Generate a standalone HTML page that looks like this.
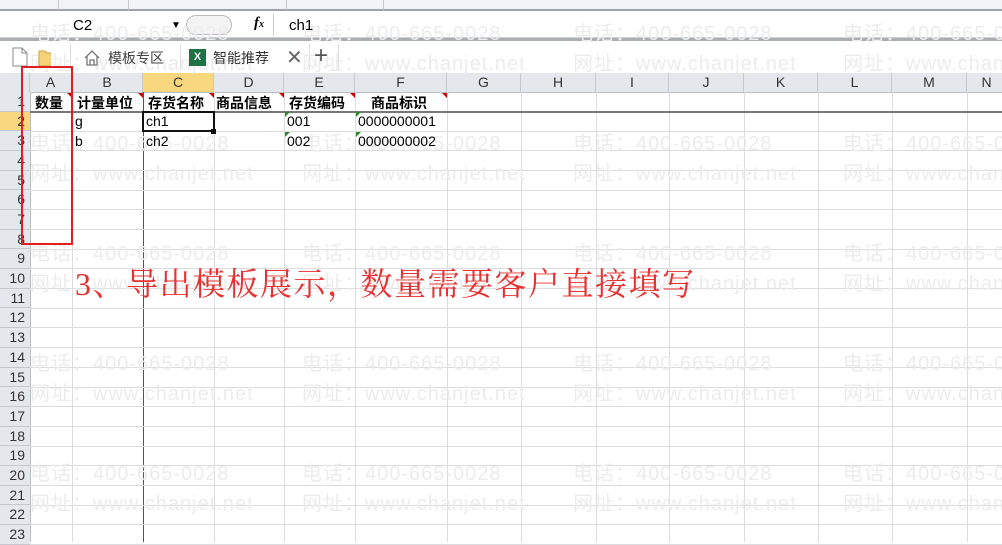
<!DOCTYPE html>
<html><head><meta charset="utf-8"><style>
*{margin:0;padding:0;box-sizing:border-box}
body{width:1002px;height:542px;overflow:hidden;background:#fff;position:relative;font-family:"Liberation Sans","Noto Sans CJK SC",sans-serif;}
.a{position:absolute}
.wm{position:absolute;color:#ececec;font-size:20px;letter-spacing:1px;white-space:nowrap;font-family:"Liberation Sans","Noto Sans CJK SC",sans-serif;z-index:5}
.vl{position:absolute;width:1px;background:#dadcdd;top:92px;height:450px}
.hl{position:absolute;height:1px;background:#dadcdd;left:30px;width:972px}
.ch{position:absolute;top:73px;height:19px;font-size:14px;color:#333;text-align:center;line-height:19px;border-right:1px solid #c5c9cf}
.rh{position:absolute;left:0;width:30px;font-size:14px;color:#333;text-align:right;padding-right:5px;border-bottom:1px solid #c5c9cf;background:#e4e7ec;z-index:6}
.c{position:absolute;font-size:14px;color:#000;white-space:nowrap;z-index:6}
.b{font-weight:bold;font-family:"Liberation Sans","Noto Sans CJK SC",sans-serif}
.tri{position:absolute;width:0;height:0;border-top:5px solid #c00;border-left:5px solid transparent;z-index:7}
.gtri{position:absolute;width:0;height:0;border-top:5px solid #2a8a2a;border-right:5px solid transparent;z-index:7}
</style></head><body>
<div class="a" style="left:0;top:0;width:1002px;height:11px;background:#f2f3f5;border-bottom:2px solid #9da3aa"></div>
<div class="a" style="left:58px;top:0;width:1px;height:10px;background:#c8c8c8"></div>
<div class="a" style="left:128px;top:0;width:1px;height:10px;background:#c8c8c8"></div>
<div class="a" style="left:286px;top:0;width:1px;height:10px;background:#c8c8c8"></div>
<div class="a" style="left:383px;top:0;width:1px;height:10px;background:#c8c8c8"></div>
<div class="a" style="left:0;top:13px;width:1002px;height:28px;background:#fff;border-bottom:3px solid #a9aeb4"></div>
<div class="a" style="left:0;top:37px;width:1002px;height:1px;background:#d0d0d0"></div>
<div class="a" style="left:73px;top:17px;font-size:15px;z-index:6">C2</div>
<div class="a" style="left:171px;top:20px;font-size:10px;z-index:6">▼</div>
<div class="a" style="left:186px;top:15px;width:46px;height:20px;border:1px solid #bbb;border-radius:10px;background:#f4f4f4"></div>
<div class="a" style="left:254px;top:15px;font-size:15px;font-style:italic;font-weight:bold;font-family:'Liberation Serif',serif;z-index:6">f<span style="font-size:10px">x</span></div>
<div class="a" style="left:273px;top:14px;width:1px;height:22px;background:#ccc"></div>
<div class="a" style="left:289px;top:17px;font-size:15px;z-index:6">ch1</div>
<div class="a" style="left:0;top:41px;width:1002px;height:32px;background:#fff"></div>
<svg class="a" style="left:11px;top:47px;z-index:6" width="40" height="20"><path d="M2 1h9l5 5v13H2z M11 1v5h5" fill="#fff" stroke="#888" stroke-width="1"/><path d="M28 4h6l2 2h8v13H28z" fill="#f3d27a" stroke="#c9a040"/></svg>
<div class="a" style="left:70px;top:44px;width:1px;height:26px;background:#ddd"></div>
<svg class="a" style="left:83px;top:49px;z-index:6" width="18" height="18"><path d="M2 9L9 2l7 7M4 7v9h10V7M7 16v-5h4v5" fill="none" stroke="#777" stroke-width="1.3"/></svg>
<div class="a" style="left:108px;top:48px;font-size:14px;color:#444;z-index:6">模板专区</div>
<div class="a" style="left:180px;top:44px;width:1px;height:26px;background:#ddd"></div>
<div class="a" style="left:189px;top:49px;width:17px;height:17px;background:#1f7244;color:#fff;font-size:11px;font-weight:bold;text-align:center;line-height:17px;z-index:6">X</div>
<div class="a" style="left:213px;top:48px;font-size:14px;color:#333;z-index:6">智能推荐</div>
<div class="a" style="left:286px;top:45px;font-size:20px;color:#666;z-index:6">✕</div>
<div class="a" style="left:314px;top:42px;font-size:24px;color:#555;z-index:6">+</div>
<div class="a" style="left:309px;top:44px;width:1px;height:26px;background:#ddd"></div>
<div class="a" style="left:338px;top:44px;width:1px;height:26px;background:#ddd"></div>
<div class="a" style="left:0;top:73px;width:1002px;height:20px;background:#e4e7ec;border-bottom:1px solid #b9bec5"></div>
<div class="ch" style="left:0;width:30px"></div>
<div class="ch" style="left:30px;width:42px">A</div>
<div class="ch" style="left:72px;width:71px">B</div>
<div class="ch" style="left:143px;width:71px;background:#f9d77e">C</div>
<div class="ch" style="left:214px;width:70px">D</div>
<div class="ch" style="left:284px;width:71px">E</div>
<div class="ch" style="left:355px;width:92px">F</div>
<div class="ch" style="left:447px;width:74px">G</div>
<div class="ch" style="left:521px;width:75px">H</div>
<div class="ch" style="left:596px;width:73px">I</div>
<div class="ch" style="left:669px;width:75px">J</div>
<div class="ch" style="left:744px;width:74px">K</div>
<div class="ch" style="left:818px;width:74px">L</div>
<div class="ch" style="left:892px;width:75px">M</div>
<div class="ch" style="left:967px;width:40px">N</div>
<div class="vl" style="left:72px"></div>
<div class="vl" style="left:143px;background:#555"></div>
<div class="vl" style="left:214px"></div>
<div class="vl" style="left:284px"></div>
<div class="vl" style="left:355px"></div>
<div class="vl" style="left:447px"></div>
<div class="vl" style="left:521px"></div>
<div class="vl" style="left:596px"></div>
<div class="vl" style="left:669px"></div>
<div class="vl" style="left:744px"></div>
<div class="vl" style="left:818px"></div>
<div class="vl" style="left:892px"></div>
<div class="vl" style="left:967px"></div>
<div class="vl" style="left:30px;background:#b9bec5"></div>
<div id="rows"></div>
<script>
var h='';for(var i=1;i<=23;i++){var t=92+(i-1)*19.68;var bg=i==2?'#f9d77e':'#e4e7ec';
h+='<div class="rh" style="top:'+t+'px;height:19.68px;line-height:19px;background:'+bg+'">'+i+'</div>';
h+='<div class="hl" style="top:'+(t+19)+'px;'+(i==1?'background:#777;height:2px':'')+'"></div>';}
document.getElementById('rows').innerHTML=h;
</script>
<script>
var w='';[17,127,237,347,457].forEach(function(y){[30,302,573,843].forEach(function(x){
w+='<div class="wm" style="left:'+x+'px;top:'+y+'px">电话：400-665-0028</div>';
w+='<div class="wm" style="left:'+x+'px;top:'+(y+30)+'px">网址：www.chanjet.net</div>';});});
document.write(w);
</script>
<div class="c b" style="left:35px;top:93px">数量</div>
<div class="c b" style="left:77px;top:93px">计量单位</div>
<div class="c b" style="left:148px;top:93px">存货名称</div>
<div class="c b" style="left:216px;top:93px">商品信息</div>
<div class="c b" style="left:289px;top:93px">存货编码</div>
<div class="c b" style="left:371px;top:93px">商品标识</div>
<div class="tri" style="left:67px;top:93px"></div>
<div class="tri" style="left:138px;top:93px"></div>
<div class="tri" style="left:209px;top:93px"></div>
<div class="tri" style="left:279px;top:93px"></div>
<div class="tri" style="left:350px;top:93px"></div>
<div class="tri" style="left:442px;top:93px"></div>
<div class="c" style="left:75px;top:113px">g</div>
<div class="c" style="left:146px;top:113px">ch1</div>
<div class="c" style="left:287px;top:113px">001</div>
<div class="c" style="left:358px;top:113px">0000000001</div>
<div class="c" style="left:75px;top:133px">b</div>
<div class="c" style="left:146px;top:133px">ch2</div>
<div class="c" style="left:287px;top:133px">002</div>
<div class="c" style="left:358px;top:133px">0000000002</div>
<div class="gtri" style="left:285px;top:112px"></div>
<div class="gtri" style="left:356px;top:112px"></div>
<div class="gtri" style="left:285px;top:132px"></div>
<div class="gtri" style="left:356px;top:132px"></div>
<div class="a" style="left:142px;top:111px;width:73px;height:21px;border:2px solid #111;z-index:7"></div>
<div class="a" style="left:211px;top:129px;width:5px;height:5px;background:#111;z-index:8"></div>
<div class="a" style="left:21px;top:66px;width:52px;height:179px;border:2px solid #e02020;z-index:9"></div>
<div class="a" style="left:75px;top:264px;font-size:32px;letter-spacing:1.5px;line-height:40px;color:#e83030;white-space:nowrap;font-family:'Liberation Serif','Noto Serif CJK SC',serif;z-index:9">3、导出模板展示，数量需要客户直接填写</div>
</body></html>
